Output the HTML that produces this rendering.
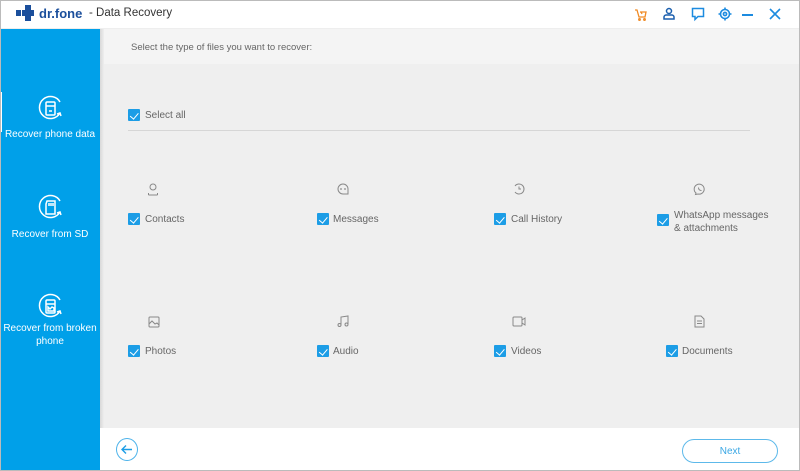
<!DOCTYPE html><html><head><style>
*{margin:0;padding:0;box-sizing:border-box}
body{width:800px;height:471px;position:relative;overflow:hidden;background:#efefef;font-family:"Liberation Sans",sans-serif;font-size:10px;color:#666}
.a{position:absolute}
.cb{position:absolute;width:12px;height:12px;background:#1c9de6;border-radius:1px}
.cb:after{content:"";position:absolute;left:4px;top:1.5px;width:3.5px;height:6.5px;border:solid #fff;border-width:0 1.5px 1.5px 0;transform:rotate(40deg)}
.lb{position:absolute;font-size:10px;color:#666}
.side{position:absolute;left:0;top:29px;width:100px;height:442px;background:#00a0e9}
.st{position:absolute;width:100px;text-align:center;color:#fff;font-size:10px;line-height:13px}
svg{position:absolute;overflow:visible}
</style></head><body>
<div class="a" style="left:0;top:0;width:800px;height:29px;background:#fff;border-bottom:1px solid #eee"></div>
<div class="a" style="left:16px;top:10px;width:5px;height:6px;background:#1b4f9c"></div>
<div class="a" style="left:22px;top:10px;width:12px;height:6px;background:#1b4f9c"></div>
<div class="a" style="left:25px;top:5px;width:6px;height:16px;background:#1b4f9c"></div>
<div class="a" style="left:39px;top:6px;font-size:13px;font-weight:bold;color:#1b4f9c">dr.fone</div>
<div class="a" style="left:89px;top:7px;font-size:11.5px;color:#333">- Data Recovery</div>
<svg style="left:634px;top:8px" width="14" height="14" fill="none" stroke="#f08a24" stroke-width="1.3"><path d="M1 2h2l2 7h6l1-5H6M7 4l1 2"/><circle cx="5.5" cy="11.5" r=".8"/><circle cx="10.5" cy="11.5" r=".8"/></svg>
<svg style="left:662px;top:7px" width="14" height="14" fill="none" stroke="#1b5fae" stroke-width="1.5"><circle cx="7" cy="4" r="2.5"/><path d="M2 12h10v-2c0-1-1-2-2-2H4c-1 0-2 1-2 2z"/></svg>
<svg style="left:691px;top:7px" width="14" height="14" fill="none" stroke="#1c8be0" stroke-width="1.5"><path d="M1.5 1.5h11v8H7l-3 3v-3H1.5z"/></svg>
<svg style="left:718px;top:7px" width="14" height="14" fill="none" stroke="#1c8be0" stroke-width="1.6"><circle cx="7" cy="7" r="4.5"/><circle cx="7" cy="7" r="1.6"/><path d="M7 0.5v2M7 11.5v2M0.5 7h2M11.5 7h2"/></svg>
<div class="a" style="left:742px;top:14px;width:11px;height:1.5px;background:#1c8be0"></div>
<svg style="left:769px;top:8px" width="12" height="12" stroke="#1c8be0" stroke-width="1.6"><path d="M1 1l10 10M11 1L1 11"/></svg>
<div class="a" style="left:100px;top:29px;width:700px;height:35px;background:#f4f4f4"></div>
<div class="a" style="left:131px;top:42px;font-size:9.5px;color:#666">Select the type of files you want to recover:</div>
<div class="side"></div>
<div class="a" style="left:100px;top:29px;width:4px;height:442px;background:linear-gradient(90deg,#d8d8d8,#efefef)"></div>
<div class="a" style="left:0;top:92px;width:2px;height:40px;background:#fff"></div>
<svg style="left:36px;top:94px" width="30" height="30" fill="none" stroke="#fff" stroke-width="1.5"><path d="M24 19A11 11 0 1 1 24 8"/><path d="M21 20l3-1 1 3"/><rect x="10" y="8" width="9" height="13" rx="1"/><path d="M10 12h9"/><path d="M13 17h3"/></svg>
<div class="st" style="left:0;top:128px">Recover phone data</div>
<svg style="left:36px;top:193px" width="30" height="30" fill="none" stroke="#fff" stroke-width="1.5"><path d="M24 19A11 11 0 1 1 24 8"/><path d="M21 20l3-1 1 3"/><path d="M11 8h8v13h-9V11z"/><path d="M13 10v3M15 10v3M17 10v3"/></svg>
<div class="st" style="left:0;top:228px">Recover from SD</div>
<svg style="left:36px;top:292px" width="30" height="30" fill="none" stroke="#fff" stroke-width="1.5"><path d="M24 19A11 11 0 1 1 24 8"/><path d="M21 20l3-1 1 3"/><rect x="10" y="8" width="9" height="13" rx="1"/><path d="M10 12h9M12 15l2 2 2-2 2 1v3h-6z"/></svg>
<div class="st" style="left:0;top:322px">Recover from broken<br>phone</div>
<div class="cb" style="left:128px;top:109px"></div><div class="lb" style="left:145px;top:110px">Select all</div>
<div class="a" style="left:128px;top:130px;width:622px;height:1px;background:#d6d6d6"></div>
<svg style="left:147px;top:183px" width="12" height="13" fill="none" stroke="#888" stroke-width="1"><circle cx="6" cy="4" r="3"/><path d="M1.5 12h9M1.5 12v-2M10.5 12v-2"/></svg>
<svg style="left:337px;top:183px" width="12" height="12" fill="none" stroke="#888" stroke-width="1"><path d="M6 11A5 5 0 1 1 11 6v5z"/><circle cx="4" cy="6" r=".4"/><circle cx="8" cy="6" r=".4"/></svg>
<svg style="left:513px;top:183px" width="12" height="12" fill="none" stroke="#888" stroke-width="1"><path d="M2 9A5 5 0 1 0 2 3"/><path d="M6 3.5V6h2"/></svg>
<svg style="left:694px;top:183px" width="12" height="12" fill="none" stroke="#888" stroke-width="1"><path d="M2 10A5 5 0 1 1 4 11l-2.5.5z"/><path d="M4.5 4.5c0 2 1 3 3 3"/></svg>
<div class="cb" style="left:128px;top:213px"></div><div class="lb" style="left:145px;top:214px">Contacts</div>
<div class="cb" style="left:317px;top:213px"></div><div class="lb" style="left:333px;top:214px">Messages</div>
<div class="cb" style="left:494px;top:213px"></div><div class="lb" style="left:511px;top:214px">Call History</div>
<div class="cb" style="left:657px;top:214px"></div><div class="lb" style="left:674px;top:209px;line-height:13px">WhatsApp messages<br>&amp; attachments</div>
<svg style="left:148px;top:316px" width="12" height="12" fill="none" stroke="#888" stroke-width="1"><rect x="1" y="1" width="10" height="10" rx="1"/><path d="M1 8l3-3 3 3 2-1 2 2"/></svg>
<svg style="left:337px;top:315px" width="12" height="13" fill="none" stroke="#888" stroke-width="1"><path d="M4 10V2l7-1v8"/><circle cx="2.5" cy="10" r="1.5"/><circle cx="9.5" cy="9.5" r="1.5"/></svg>
<svg style="left:512px;top:316px" width="14" height="11" fill="none" stroke="#888" stroke-width="1"><rect x="1" y="1" width="9" height="9" rx="1"/><path d="M10 4l3-2v7l-3-2"/></svg>
<svg style="left:694px;top:315px" width="11" height="13" fill="none" stroke="#888" stroke-width="1"><path d="M1 1h6l3 3v8H1z"/><path d="M3 6h5M3 8.5h5"/></svg>
<div class="cb" style="left:128px;top:345px"></div><div class="lb" style="left:145px;top:346px">Photos</div>
<div class="cb" style="left:317px;top:345px"></div><div class="lb" style="left:333px;top:346px">Audio</div>
<div class="cb" style="left:494px;top:345px"></div><div class="lb" style="left:511px;top:346px">Videos</div>
<div class="cb" style="left:666px;top:345px"></div><div class="lb" style="left:682px;top:346px">Documents</div>
<div class="a" style="left:100px;top:428px;width:700px;height:43px;background:#fff"></div>
<div class="a" style="left:116px;top:438px;width:22px;height:23px;border:1px solid #4db3ea;border-radius:50%"></div>
<svg style="left:120px;top:443px" width="14" height="13" fill="none" stroke="#1c9de6" stroke-width="1.4"><path d="M12 6.5H2M6 2.5l-4 4 4 4"/></svg>
<div class="a" style="left:682px;top:439px;width:96px;height:24px;border:1px solid #5db9ea;border-radius:12px;text-align:center;line-height:24px;color:#3aa7e4;font-size:10px">Next</div>
<div class="a" style="left:0;top:0;width:800px;height:471px;border:1px solid #bbb;pointer-events:none"></div>
</body></html>
